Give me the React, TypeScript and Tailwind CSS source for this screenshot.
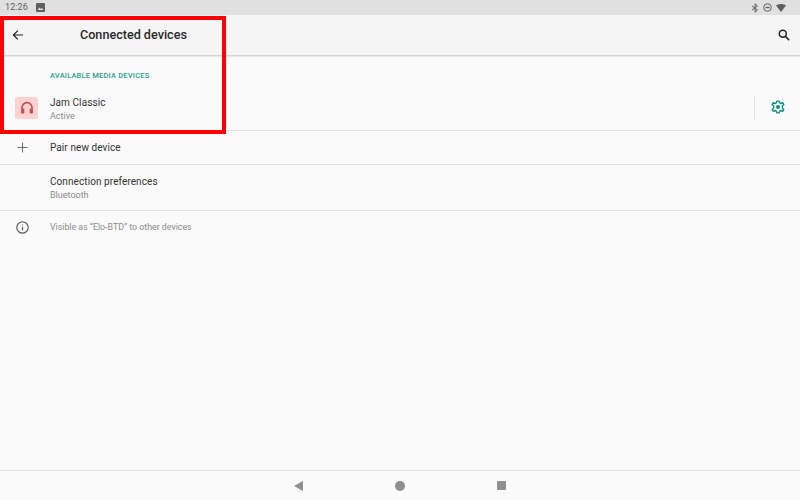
import React from "react";

const font = { fontFamily: "Roboto, sans-serif" };

function Row({ icon, title, sub, h, border = true }: { icon?: React.ReactNode; title: string; sub?: string; h: string; border?: boolean }) {
  return (
    <div className={`flex items-center ${h} ${border ? "border-b border-[#e2e2e2]" : ""}`}>
      <div className="w-[50px] flex justify-center shrink-0">{icon}</div>
      <div className="flex-1 flex flex-col">
        <div className="text-[10px] leading-[14px] pt-[1px] text-[#333333] tracking-[0.08px]">{title}</div>
        {sub && <div className="text-[9px] leading-[12px] text-[#8c8c8c]">{sub}</div>}
      </div>
    </div>
  );
}

export default function App() {
  return (
    <div className="relative w-[800px] h-[500px] overflow-hidden flex flex-col bg-[#fafafa]" style={font}>
      <div className="h-[15px] shrink-0 bg-[#e0e0e0] flex items-center pl-[5px] pr-[14px] text-[#5f5f5f]">
        <span className="text-[9px] leading-none tracking-[0.1px]">12:26</span>
        <svg className="ml-[8px]" width="9" height="9" viewBox="0 0 9 9">
          <rect width="9" height="9" rx="1" fill="#5f5f5f" />
          <path d="M1.5 7 L3.5 4.5 L4.8 6 L5.8 5 L7.5 7 Z" fill="#e0e0e0" />
        </svg>
        <div className="flex-1" />
        <svg width="8" height="10" viewBox="0 0 8 10" fill="none" stroke="#5f5f5f" strokeWidth="1">
          <path d="M1 3 L6.5 7 L4 9.2 V0.8 L6.5 3 L1 7" />
        </svg>
        <svg className="ml-[4px]" width="9" height="9" viewBox="0 0 9 9" fill="none" stroke="#5f5f5f" strokeWidth="1">
          <circle cx="4.5" cy="4.5" r="3.8" />
          <path d="M2.5 4.5 H6.5" strokeWidth="1.4" />
        </svg>
        <svg className="ml-[4px]" width="10" height="8" viewBox="0 0 10 8">
          <path d="M0 1.5 C3 -0.5 7 -0.5 10 1.5 L5 8 Z" fill="#5f5f5f" />
        </svg>
      </div>

      <div className="h-[41px] shrink-0 bg-[#f5f5f5] border-b border-[#d4d4d4] shadow-[0_1px_1px_rgba(0,0,0,0.06)] flex items-center pl-[12px] pr-[10px]">
        <svg width="12" height="12" viewBox="0 0 12 12" fill="none" stroke="#222" strokeWidth="1.2">
          <path d="M11 6 H1.5 M5.8 1.6 L1.4 6 L5.8 10.4" />
        </svg>
        <div className="ml-[56px] pt-[1px] text-[12.6px] font-medium leading-none text-[#2a2a2a]">Connected devices</div>
        <div className="flex-1" />
        <svg width="12" height="12" viewBox="0 0 12 12" fill="none" stroke="#222" strokeWidth="1.5">
          <circle cx="4.8" cy="4.8" r="3.5" />
          <path d="M7.4 7.4 L11.2 11.2" />
        </svg>
      </div>

      <div className="flex-1 flex flex-col">
        <div className="h-[75px] border-b border-[#e2e2e2] flex flex-col">
          <div className="pl-[50px] pt-[15px] text-[7.5px] leading-[9px] font-medium tracking-[0.2px] text-[#2a9d8f]">AVAILABLE MEDIA DEVICES</div>
          <div className="flex-1 flex items-center pt-[6px]">
            <div className="w-[50px] flex pl-[15px] shrink-0">
              <div className="w-[23px] h-[22px] rounded-[2px] bg-[#fdd2d0] flex items-center justify-center">
                <svg width="14" height="14" viewBox="0 0 14 14" fill="none" stroke="#c4504f" strokeWidth="1.6">
                  <path d="M2 8 V6.6 a5 5 0 0 1 10 0 V8" />
                  <rect x="1.1" y="7.4" width="3.2" height="5.2" rx="1.2" fill="#c4504f" stroke="none" />
                  <rect x="9.7" y="7.4" width="3.2" height="5.2" rx="1.2" fill="#c4504f" stroke="none" />
                </svg>
              </div>
            </div>
            <div className="flex-1 flex flex-col">
              <div className="text-[10px] leading-[14px] pt-[1px] text-[#333333] tracking-[0.08px]">Jam Classic</div>
              <div className="text-[9px] leading-[12px] text-[#8c8c8c]">Active</div>
            </div>
            <div className="w-px h-[26px] bg-[#e2e2e2]" />
            <div className="w-[45px] flex justify-center -mt-[2px]">
              <svg width="14" height="14" viewBox="0 0 24 24" fill="none" stroke="#0f8f80" strokeWidth="2.4">
                <path d="M10 2 L14 2 L14.8 5 L17.2 6 L20 4.6 L22 7.8 L19.6 9.8 L19.6 14.2 L22 16.2 L20 19.4 L17.2 18 L14.8 19 L14 22 L10 22 L9.2 19 L6.8 18 L4 19.4 L2 16.2 L4.4 14.2 L4.4 9.8 L2 7.8 L4 4.6 L6.8 6 L9.2 5 Z" strokeLinejoin="round" />
                <circle cx="12" cy="12" r="3.4" fill="#0f8f80" stroke="none" />
              </svg>
            </div>
          </div>
        </div>
        <Row
          h="h-[34px]"
          title="Pair new device"
          icon={
            <svg className="-ml-[5px]" width="11" height="11" viewBox="0 0 11 11" stroke="#6e6e6e" strokeWidth="1">
              <path d="M5.5 0.5 V10.5 M0.5 5.5 H10.5" />
            </svg>
          }
        />
        <Row h="h-[46px]" title="Connection preferences" sub="Bluetooth" />
        <div className="h-[32px] flex items-center">
          <div className="w-[50px] flex justify-center shrink-0">
            <svg className="-ml-[5px]" width="13" height="13" viewBox="0 0 13 13" fill="none" stroke="#5f5f5f" strokeWidth="1.2">
              <circle cx="6.5" cy="6.5" r="5.7" />
              <path d="M6.5 5.8 V9.6 M6.5 3.4 V4.6" />
            </svg>
          </div>
          <div className="text-[8.8px] leading-none text-[#8c8c8c]">Visible as “Elo-BTD” to other devices</div>
        </div>
      </div>

      <div className="h-[30px] shrink-0 bg-[#fafafa] border-t border-[#e4e4e4] flex items-center justify-center gap-[92px]">
        <svg width="9" height="10" viewBox="0 0 9 10"><path d="M9 0 V10 L0 5 Z" fill="#8f8f8f" /></svg>
        <div className="w-[10px] h-[10px] rounded-full bg-[#8f8f8f]" />
        <div className="w-[9px] h-[9px] rounded-[1px] bg-[#8f8f8f]" />
      </div>

      <div className="absolute left-0 top-[16px] w-[226px] h-[118px] border-4 border-[#ff0000]" />
    </div>
  );
}
